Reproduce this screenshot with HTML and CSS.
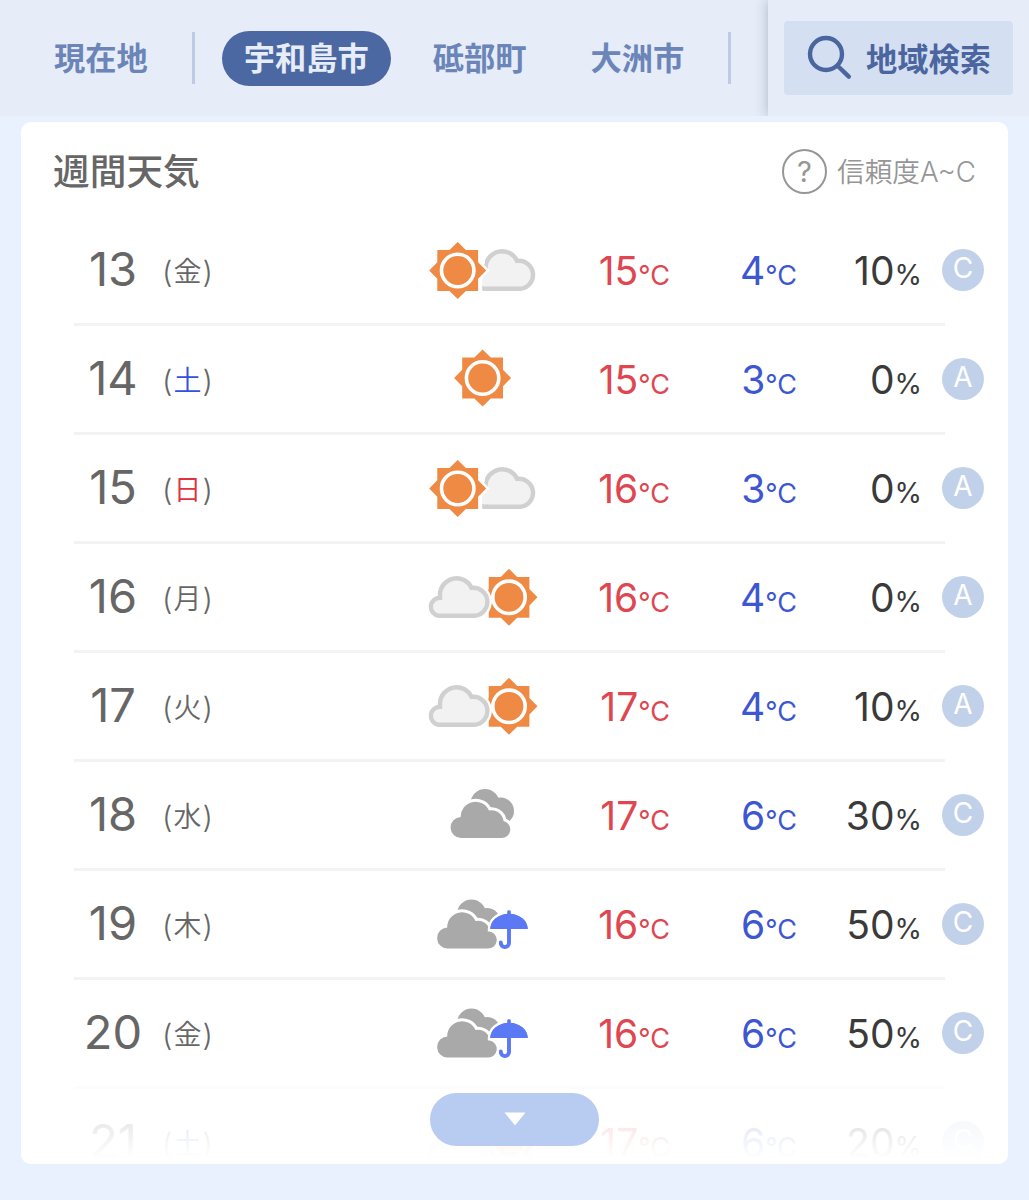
FILE: index.html
```html
<!DOCTYPE html>
<html lang="ja">
  <head>
    <meta charset="UTF-8" />
    <meta name="viewport" content="width=device-width, initial-scale=1.0" />
    <title>週間天気</title>
    <link rel="stylesheet" href="styles.css">
  </head>
  <body>
    <!-- Icon shapes -->
    <svg class="icon-defs" width="0" height="0">
      <defs>
        <g id="sun-shape">
          <path d="M-20.4 -20.4H-8.2L0 -28.5L8.2 -20.4H20.4V-8.2L28.5 0L20.4 8.2V20.4H8.2L0 28.5L-8.2 20.4H-20.4V8.2L-28.5 0L-20.4 -8.2Z" />
        </g>
        <g id="sun">
          <use href="#sun-shape" fill="#ef8a45" />
          <circle r="16.2" fill="none" stroke="#fff" stroke-width="3.6" />
        </g>
        <path id="cloud-shape" d="M15.5 48.7A9 9 0 0 1 17 30.8V27A16.5 16.5 0 0 1 48.5 20.9A14 14 0 1 1 51.8 48.7Z" />
        <use id="cloud" href="#cloud-shape" fill="#f2f2f2" stroke="#d0d0d0" stroke-width="4.4" />
        <g id="dark-cloud">
          <g fill="#a9a9a9">
            <circle cx="62" cy="18.5" r="14.5" />
            <circle cx="77.5" cy="26" r="13.5" />
            <path d="M62 18L78 26L85.5 36.5H70Z" />
          </g>
          <path d="M38.5 53A10.5 10.5 0 0 1 37.7 32A14.8 14.8 0 0 1 66 25.5A12 12 0 0 1 80.5 36A8.6 8.6 0 0 1 78.5 53Z" fill="#a9a9a9" stroke="#fff" stroke-width="6" paint-order="stroke" />
        </g>
        <g id="umbrella">
          <path d="M67.3 35A18.7 15.2 0 0 1 104.7 35ZM84.2 22V17.5Q84.2 16.2 86 16.2T87.8 17.5V22Z" fill="#5b78f5" stroke="#fff" stroke-width="5" paint-order="stroke" />
          <path d="M86 34V49A4.1 4.1 0 0 1 77.8 49V48.4" fill="none" stroke="#fff" stroke-width="8" />
          <path d="M67.3 35A18.7 15.2 0 0 1 104.7 35Z" fill="#5b78f5" />
          <path d="M86 34V49A4.1 4.1 0 0 1 77.8 49V48.4" fill="none" stroke="#5b78f5" stroke-width="3.9" stroke-linecap="round" />
        </g>

        <symbol id="w-sun" viewBox="0 0 120 60">
          <use href="#sun" x="59.6" y="29" />
        </symbol>
        <symbol id="w-sun-cloud" viewBox="0 0 120 60">
          <use href="#cloud" x="45.6" />
          <use href="#sun-shape" x="34.7" y="30.5" fill="#fff" stroke="#fff" stroke-width="5" />
          <path d="M50 8H61L62 23L59.2 27V56H50Z" fill="#fff" />
          <use href="#sun" x="34.7" y="30.5" />
        </symbol>
        <symbol id="w-cloud-sun" viewBox="0 0 120 60">
          <use href="#sun" x="86" y="30.3" />
          <use href="#cloud-shape" fill="#fff" stroke="#fff" stroke-width="9" />
          <path d="M50 -5H65.3V65H50Z" fill="#fff" />
          <use href="#cloud" />
        </symbol>
        <symbol id="w-cloudy" viewBox="0 0 120 60">
          <use href="#dark-cloud" />
        </symbol>
        <symbol id="w-cloud-rain" viewBox="0 0 120 60">
          <use href="#dark-cloud" x="-13.5" y="1.5" />
          <use href="#umbrella" />
        </symbol>
      </defs>
    </svg>

    <header class="header">
      <nav class="tabs">
        <a class="tab">現在地</a>
        <span class="divider"></span>
        <a class="tab active">宇和島市</a>
        <a class="tab">砥部町</a>
        <a class="tab">大洲市</a>
        <span class="divider"></span>
      </nav>
      <div class="search-area">
        <button class="search-btn">
          <svg width="46" height="46" viewBox="0 0 46 46" fill="none" stroke="#4b669f" stroke-width="4.4" stroke-linecap="round">
            <circle cx="20" cy="19" r="16" />
            <path d="M31.8 31L42.8 41.6" />
          </svg>
          <span>地域検索</span>
        </button>
      </div>
    </header>

    <main class="card">
      <div class="card-header">
        <h1>週間天気</h1>
        <div class="reliability"><span class="help">?</span><span class="reliability-text">信頼度A~C</span></div>
      </div>

      <ul class="forecast">
        <li class="row">
          <div class="row-main">
            <span class="date">13</span><span class="weekday">(<b>金</b>)</span>
            <svg class="icon"><use href="#w-sun-cloud" /></svg>
            <span class="temp high">15<small>°C</small></span>
            <span class="temp low">4<small>°C</small></span>
            <span class="rain">10<small>%</small></span>
          </div>
          <span class="badge">C</span>
        </li>
        <li class="row">
          <div class="row-main">
            <span class="date">14</span><span class="weekday sat">(<b>土</b>)</span>
            <svg class="icon"><use href="#w-sun" /></svg>
            <span class="temp high">15<small>°C</small></span>
            <span class="temp low">3<small>°C</small></span>
            <span class="rain">0<small>%</small></span>
          </div>
          <span class="badge">A</span>
        </li>
        <li class="row">
          <div class="row-main">
            <span class="date">15</span><span class="weekday sun">(<b>日</b>)</span>
            <svg class="icon"><use href="#w-sun-cloud" /></svg>
            <span class="temp high">16<small>°C</small></span>
            <span class="temp low">3<small>°C</small></span>
            <span class="rain">0<small>%</small></span>
          </div>
          <span class="badge">A</span>
        </li>
        <li class="row">
          <div class="row-main">
            <span class="date">16</span><span class="weekday">(<b>月</b>)</span>
            <svg class="icon"><use href="#w-cloud-sun" /></svg>
            <span class="temp high">16<small>°C</small></span>
            <span class="temp low">4<small>°C</small></span>
            <span class="rain">0<small>%</small></span>
          </div>
          <span class="badge">A</span>
        </li>
        <li class="row">
          <div class="row-main">
            <span class="date">17</span><span class="weekday">(<b>火</b>)</span>
            <svg class="icon"><use href="#w-cloud-sun" /></svg>
            <span class="temp high">17<small>°C</small></span>
            <span class="temp low">4<small>°C</small></span>
            <span class="rain">10<small>%</small></span>
          </div>
          <span class="badge">A</span>
        </li>
        <li class="row">
          <div class="row-main">
            <span class="date">18</span><span class="weekday">(<b>水</b>)</span>
            <svg class="icon"><use href="#w-cloudy" /></svg>
            <span class="temp high">17<small>°C</small></span>
            <span class="temp low">6<small>°C</small></span>
            <span class="rain">30<small>%</small></span>
          </div>
          <span class="badge">C</span>
        </li>
        <li class="row">
          <div class="row-main">
            <span class="date">19</span><span class="weekday">(<b>木</b>)</span>
            <svg class="icon"><use href="#w-cloud-rain" /></svg>
            <span class="temp high">16<small>°C</small></span>
            <span class="temp low">6<small>°C</small></span>
            <span class="rain">50<small>%</small></span>
          </div>
          <span class="badge">C</span>
        </li>
        <li class="row">
          <div class="row-main">
            <span class="date">20</span><span class="weekday">(<b>金</b>)</span>
            <svg class="icon"><use href="#w-cloud-rain" /></svg>
            <span class="temp high">16<small>°C</small></span>
            <span class="temp low">6<small>°C</small></span>
            <span class="rain">50<small>%</small></span>
          </div>
          <span class="badge">C</span>
        </li>
        <li class="row">
          <div class="row-main">
            <span class="date">21</span><span class="weekday sat">(<b>土</b>)</span>
            <svg class="icon"><use href="#w-cloud-sun" /></svg>
            <span class="temp high">17<small>°C</small></span>
            <span class="temp low">6<small>°C</small></span>
            <span class="rain">20<small>%</small></span>
          </div>
          <span class="badge">C</span>
        </li>
      </ul>

      <div class="fade">
        <button class="more-btn" aria-label="もっと見る">
          <svg width="22" height="14" viewBox="0 0 22 14"><path d="M0.5 0.5H21.5L11 13.5Z" fill="#fff" /></svg>
        </button>
      </div>
    </main>
  </body>
</html>
```
FILE: styles.css
```css
* {
  margin: 0;
  padding: 0;
  box-sizing: border-box;
}

body {
  height: 1200px;
  overflow: hidden;
  background: #eaf1fe;
  font-family: Inter, "Noto Sans CJK JP", sans-serif;
  color: #666;
}

button {
  border: none;
  font-family: inherit;
}

.icon-defs {
  position: absolute;
}

/* Header */
.header {
  display: flex;
  height: 116px;
  background: #e6ecf8;
  overflow: hidden;
}

.tabs {
  width: 768px;
  display: flex;
  align-items: center;
  padding-left: 32px;
}

.tab {
  height: 55px;
  line-height: 57px;
  padding: 0 22px;
  margin-right: 20px;
  border-radius: 28px;
  font-size: 31.25px;
  font-weight: 700;
  color: #6b85b8;
  white-space: nowrap;
}

.tab.active {
  background: #4b68a3;
  color: #e6ecf8;
}

.divider {
  width: 3px;
  height: 52px;
  margin: 0 27px 0 2px;
  background: #bfcbe4;
}

.search-area {
  flex: 1;
  padding: 21px 16px;
  background: #e6ecf8;
  box-shadow: 0 0 12px rgba(60, 75, 110, 0.35);
  clip-path: inset(0 0 0 -14px);
}

.search-btn {
  width: 229px;
  height: 74px;
  display: flex;
  align-items: center;
  padding-left: 22px;
  border-radius: 4px;
  background: #d5dff2;
  color: #4b669f;
  font-size: 31.25px;
  font-weight: 700;
}

.search-btn span {
  margin: 0 0 1px 14px;
}

/* Weekly forecast card */
.card {
  position: relative;
  width: 987px;
  height: 1042px;
  margin: 6px 0 0 21px;
  border-radius: 10px;
  background: #fff;
  overflow: hidden;
}

.card-header {
  display: flex;
  justify-content: space-between;
  align-items: center;
  height: 95px;
  padding: 3px 32px 0 32px;
}

h1 {
  padding-top: 2px;
  font-size: 36.7px;
  line-height: 50px;
  font-weight: 500;
}

.reliability {
  display: flex;
  align-items: center;
  color: #969696;
}

.reliability-text {
  padding-bottom: 3px;
  font-size: 27.7px;
  font-weight: 350;
}

.help {
  width: 45px;
  height: 45px;
  margin-right: 10px;
  border: 2.5px solid #969696;
  border-radius: 50%;
  font-size: 29px;
  line-height: 41px;
  text-align: center;
}

.forecast {
  list-style: none;
  padding-left: 53px;
}

.row {
  display: flex;
  height: 109px;
}

.row-main {
  width: 871px;
  display: grid;
  grid-template-columns: 78px 251px 160px 107px 127px 125px;
  align-items: center;
  border-bottom: 3px solid #f3f3f3;
  line-height: 60px;
}

.date {
  padding-bottom: 2px;
  text-align: center;
  font-size: 47px;
}

.weekday {
  display: flex;
  padding: 3px 0 0 10px;
  font-size: 30px;
  font-weight: 300;
}

.weekday b {
  margin: 0 1px;
  font-size: 28px;
  font-weight: 350;
}

.weekday.sat b {
  color: #3550e0;
}

.weekday.sun b {
  color: #e0333d;
}

.icon {
  width: 120px;
  height: 60px;
  margin-left: 20px;
}

.temp,
.rain {
  text-align: right;
  font-size: 39px;
  padding-top: 6px;
}

.temp small {
  font-size: 27px;
}

.rain small {
  font-size: 28px;
}

.high {
  color: #df4650;
}

.low {
  color: #3d56d2;
}

.rain {
  color: #3a3a3a;
}

.badge {
  width: 42px;
  height: 42px;
  margin: 32px 0 0 -3px;
  border-radius: 50%;
  background: #c2d1ea;
  color: #fff;
  font-size: 28px;
  line-height: 39px;
  text-align: center;
}

/* Fades out the cut-off row */
.fade {
  position: absolute;
  left: 0;
  right: 0;
  bottom: 0;
  height: 106px;
  padding-top: 35px;
  text-align: center;
  background: linear-gradient(
    rgba(255, 255, 255, 0) 0%,
    rgba(255, 255, 255, 0.75) 25%,
    rgba(255, 255, 255, 0.88) 65%,
    #fff 95%
  );
}

.more-btn {
  width: 169px;
  height: 53px;
  padding-top: 2px;
  border-radius: 27px;
  background: #b8cbf0;
}
```
